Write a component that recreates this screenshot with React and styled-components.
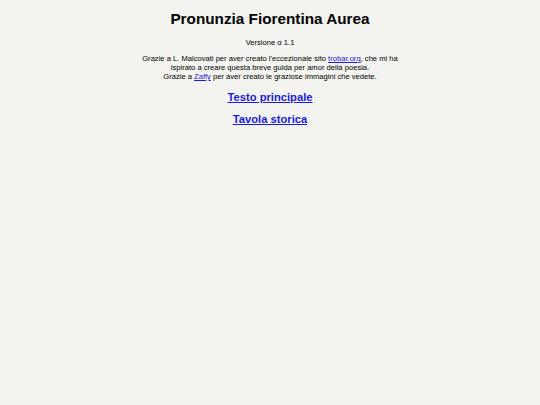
import React from 'react';
import styled, { createGlobalStyle } from 'styled-components';

const GlobalStyle = createGlobalStyle`
  html, body {
    margin: 0;
    padding: 0;
    background: #f3f3ef;
  }
  body {
    font-family: "Liberation Sans", Arial, sans-serif;
    color: #000;
  }
`;

const Page = styled.main`
  min-height: 405px;
  display: flex;
  flex-direction: column;
  align-items: center;
  text-align: center;
  padding-top: 9px;
`;

const Title = styled.h1`
  font-size: 15.3px;
  font-weight: bold;
  margin: 0 0 10px;
  line-height: 19px;
`;

const Version = styled.p`
  font-size: 7.6px;
  margin: 0 0 7px;
  line-height: 9px;
`;

const Thanks = styled.p`
  font-size: 7.6px;
  line-height: 9px;
  margin: 0 0 8px;
  max-width: 262px;

  a {
    color: #1a1adc;
  }
`;

const BigLink = styled.a`
  display: block;
  font-size: 11.2px;
  font-weight: bold;
  line-height: 14px;
  color: #1a1adc;
  text-decoration: underline;
  margin: ${({ $gap }) => $gap || '0'};
`;

export default function App() {
  return (
    <>
      <GlobalStyle />
      <Page>
        <Title>Pronunzia Fiorentina Aurea</Title>
        <Version>Versione α 1.1</Version>
        <Thanks>
          Grazie a L. Malcovati per aver creato l'eccezionale sito <a href="#">trobar.org</a>, che mi ha ispirato a creare questa breve guida per amor della poesia.
          <br />
          Grazie a <a href="#">Zaffy</a> per aver creato le graziose immagini che vedete.
        </Thanks>
        <BigLink href="#" $gap="1px 0 8px">Testo principale</BigLink>
        <BigLink href="#">Tavola storica</BigLink>
      </Page>
    </>
  );
}
